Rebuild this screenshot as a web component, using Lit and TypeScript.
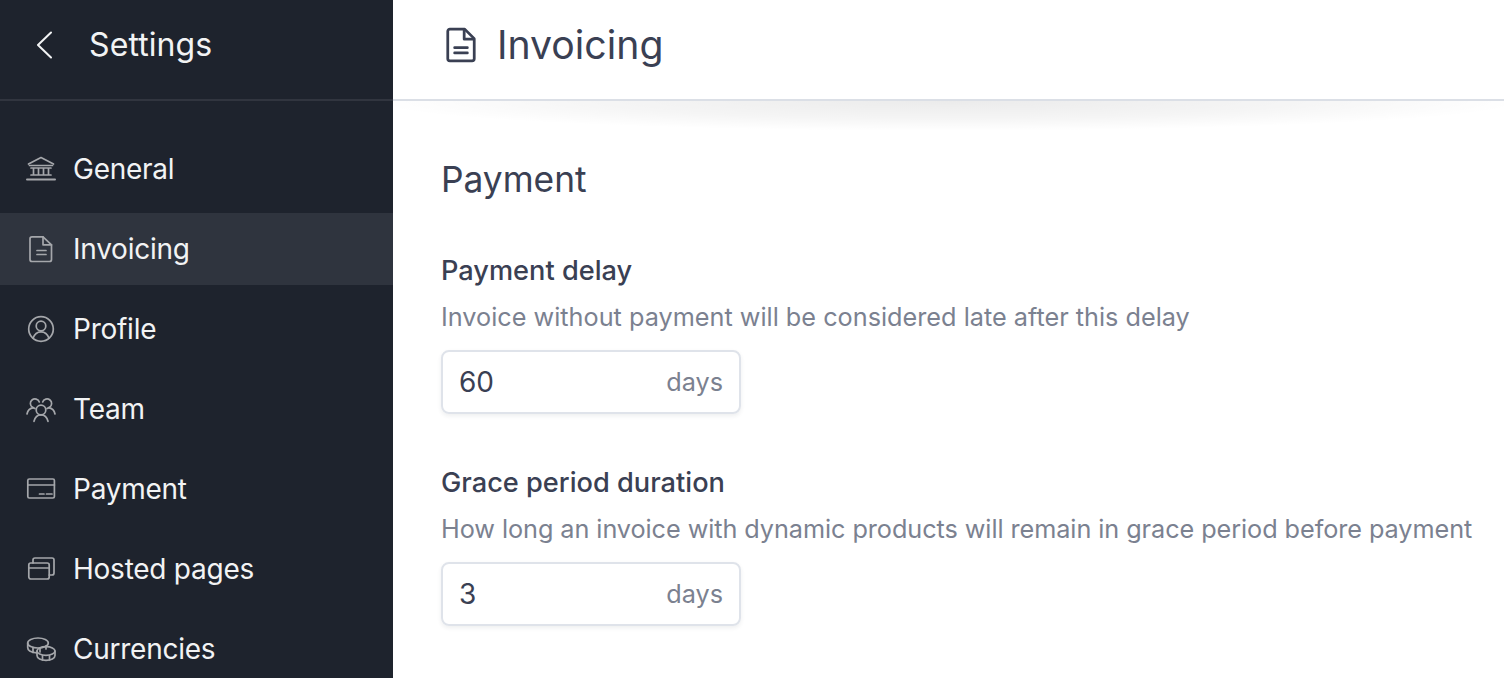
import { LitElement, html, css, svg } from "lit";
import { customElement } from "lit/decorators.js";

const ICONS: Record<string, unknown> = {
  bank: svg`<path d="M2.500 10 15 3.500 27.500 10"/><path d="M3.500 11.500h23"/><path d="M5 14h20M7.500 14.500v6M12.500 14.500v6M17.500 14.500v6M22.500 14.500v6M5 21h20"/><path d="M1 25.500h28" stroke-width="2"/>`,
  doc: svg`<path d="M6 2.800h11l8.500 8v14.700a2 2 0 0 1-2 2H6a2 2 0 0 1-2-2V4.800a2 2 0 0 1 2-2z"/><path d="M17 2.800v8h8.500"/><path d="M11 16.500h9M11 20.500h9"/>`,
  user: svg`<circle cx="15" cy="15" r="12.300"/><circle cx="15" cy="12" r="4.800"/><path d="M7 24.300c1.500-4.300 4.500-6.500 8-6.500s6.500 2.200 8 6.500"/>`,
  team: svg`<circle cx="15" cy="16" r="4.800"/><path d="M8 27.300c1-4.200 3.800-6.500 7-6.500s6 2.300 7 6.500"/><path d="M9 14.500c-.8-.3-1.800-.6-2.500-1.200A4.500 4.500 0 0 1 6 6c2.500-2 6.300-1 7.300 2"/><path d="M1 20c.5-2.800 2.700-5.700 6.500-6.300"/><path d="M21 14.500c.8-.3 1.800-.6 2.500-1.200A4.500 4.500 0 0 0 24 6c-2.500-2-6.300-1-7.300 2"/><path d="M29 20c-.5-2.800-2.700-5.700-6.500-6.300"/>`,
  card: svg`<rect x="1.800" y="5" width="26.600" height="19" rx="1.500"/><path d="M1.800 11h26.600"/><path d="M13.500 20h4.500M20.500 20h5.500"/>`,
  pages: svg`<rect x="2.800" y="9" width="20.400" height="16" rx="2"/><path d="M2.800 14h20.400"/><path d="M7 9V6a2 2 0 0 1 2-2h17a2 2 0 0 1 2 2v13a2 2 0 0 1-2 2h-2.800"/>`,
  coins: svg`<ellipse cx="12" cy="9" rx="10.300" ry="5"/><path d="M1.700 9v4.500c0 3 3.500 5 9 5.300"/><path d="M7 13.500v5M14 14v4M20 12v3"/><ellipse cx="20" cy="17" rx="9" ry="4.300"/><path d="M11 17v4.500c0 2.800 4 4.800 9 4.800s9-2 9-4.800V17"/><path d="M16.500 21.500v4.500M23.500 21.500v4.500"/>`,
};

function icon(name: string, cls: string) {
  return html`<svg class=${cls} viewBox="0 0 30 30" fill="none" stroke="currentColor" stroke-width="1.700" stroke-linecap="round" stroke-linejoin="round">${ICONS[name]}</svg>`;
}

const NAV: [string, string][] = [
  ["bank", "General"],
  ["doc", "Invoicing"],
  ["user", "Profile"],
  ["team", "Team"],
  ["card", "Payment"],
  ["pages", "Hosted pages"],
  ["coins", "Currencies"],
];

@customElement("app-root")
export class AppRoot extends LitElement {
  static styles = css`
    :host {
      display: flex;
      width: 1504px;
      height: 678px;
      overflow: hidden;
      font-family: Inter, "Liberation Sans", sans-serif;
      background: #fff;
      color: #3a4053;
    }
    .side {
      width: 393px;
      flex: none;
      background: #1e232d;
      color: #f2f3f4;
      display: flex;
      flex-direction: column;
    }
    .side-head {
      flex: none;
      display: flex;
      align-items: center;
      gap: 37px;
      padding-left: 36px;
      padding-bottom: 10px;
      box-sizing: border-box;
      border-bottom: 2px solid #31353f;
      height: 101px;
      font-size: 32px;
      letter-spacing: 0.1px;
      font-weight: 400;
    }
    .back {
      width: 16px;
      height: 28px;
      flex: none;
    }
    .nav {
      display: flex;
      flex-direction: column;
      gap: 8px;
      padding-top: 32px;
    }
    .row {
      height: 72px;
      flex: none;
      display: flex;
      align-items: center;
      gap: 17px;
      padding-left: 26px;
      font-size: 28px;
      letter-spacing: -0.25px;
    }
    .row.on {
      background: #2f343e;
    }
    .nav-ic {
      width: 30px;
      height: 30px;
      flex: none;
      color: #a5a7ab;
    }
    .main {
      flex: 1;
      min-width: 0;
      position: relative;
    }
    .head {
      height: 101px;
      box-sizing: border-box;
      border-bottom: 2px solid #dbdfe6;
      display: flex;
      align-items: center;
      gap: 20px;
      padding-left: 52px;
      padding-bottom: 10px;
      font-size: 39.2px;
    }
    .head-ic {
      width: 32px;
      height: 36px;
      flex: none;
    }
    .glow {
      position: absolute;
      left: 0;
      right: 0;
      top: 101px;
      height: 30px;
      background: radial-gradient(ellipse 52% 100% at 50% 0, rgba(0, 0, 0, 0.08), rgba(0, 0, 0, 0.04) 60%, rgba(0, 0, 0, 0) 100%);
    }
    .body {
      padding: 55px 0 0 48px;
    }
    h2 {
      margin: 0 0 49px;
      font-size: 35.3px;
      line-height: 48px;
      font-weight: 400;
    }
    .field {
      margin-bottom: 51px;
    }
    .label {
      font-size: 27.2px;
      line-height: 36px;
      font-weight: 500;
    }
    .hint {
      font-size: 25.25px;
      line-height: 36px;
      margin-top: 10px;
      margin-bottom: 15px;
      color: #7b8190;
      white-space: nowrap;
    }
    .hint.tight {
      letter-spacing: -0.07px;
    }
    .input {
      width: 300px;
      height: 64px;
      box-sizing: border-box;
      border: 2px solid #dfe3ea;
      border-radius: 8px;
      box-shadow: 0 2px 4px rgba(40, 50, 70, 0.08);
      display: flex;
      align-items: center;
      justify-content: space-between;
      padding: 0 16px;
      font-size: 28px;
    }
    .unit {
      font-size: 25.25px;
      color: #7b8190;
    }
  `;

  render() {
    return html`
      <aside class="side">
        <div class="side-head">
          <svg class="back" viewBox="0 0 16 28" fill="none" stroke="currentColor" stroke-width="2" stroke-linecap="round" stroke-linejoin="round"><path d="M15 1.500 2 14l13 12.500"/></svg>
          <span>Settings</span>
        </div>
        <nav class="nav">
          ${NAV.map(
            ([ic, label]) => html`<div class="row ${label === "Invoicing" ? "on" : ""}">${icon(ic, "nav-ic")}<span>${label}</span></div>`
          )}
        </nav>
      </aside>
      <main class="main">
        <header class="head">
          <svg class="head-ic" viewBox="0 0 30 34" fill="none" stroke="currentColor" stroke-width="2.600" stroke-linecap="round" stroke-linejoin="round"><path d="M4.500 2h14l9 9v19a2 2 0 0 1-2 2h-21a2 2 0 0 1-2-2v-26a2 2 0 0 1 2-2z"/><path d="M18 2.500v9h9"/><path d="M9 19.500h12M9 24.500h12"/></svg>
          <span>Invoicing</span>
        </header>
        <div class="glow"></div>
        <div class="body">
          <h2>Payment</h2>
          <div class="field">
            <div class="label">Payment delay</div>
            <div class="hint">Invoice without payment will be considered late after this delay</div>
            <div class="input"><span>60</span><span class="unit">days</span></div>
          </div>
          <div class="field">
            <div class="label">Grace period duration</div>
            <div class="hint tight">How long an invoice with dynamic products will remain in grace period before payment</div>
            <div class="input"><span>3</span><span class="unit">days</span></div>
          </div>
        </div>
      </main>
    `;
  }
}
